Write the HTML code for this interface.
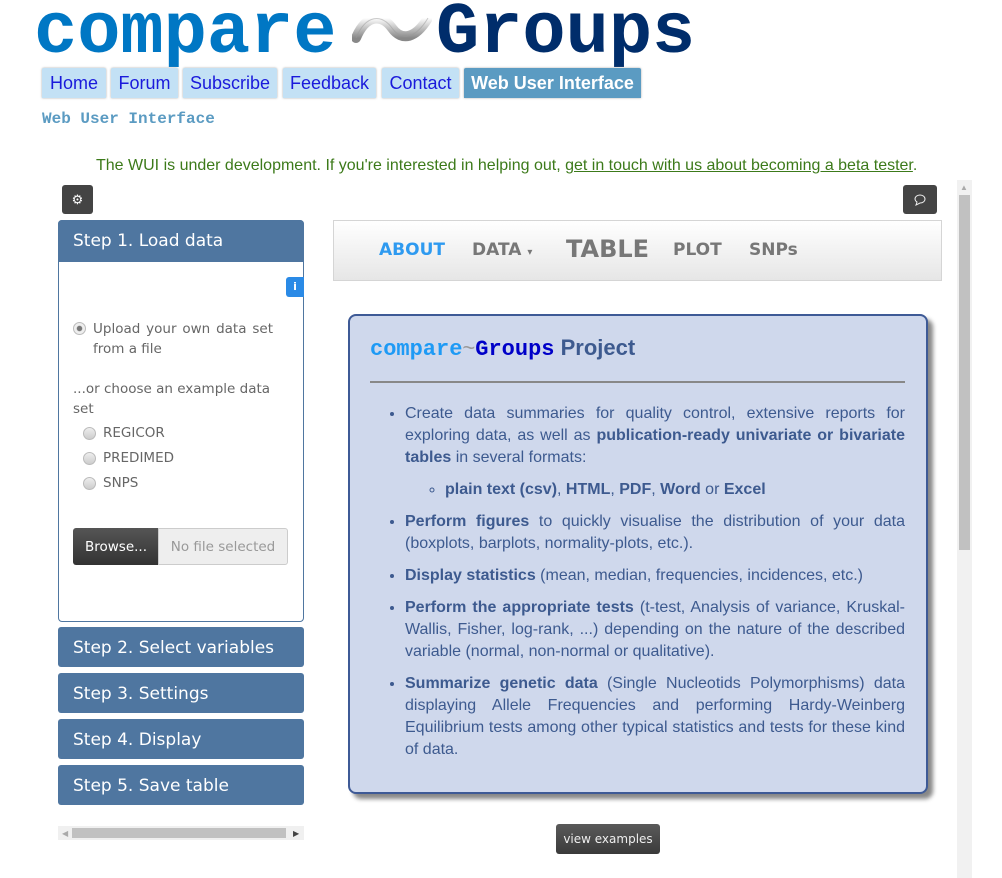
<!DOCTYPE html>
<html><head><meta charset="utf-8"><style>
body{margin:0;width:1002px;height:878px;overflow:hidden;background:#fff;font-family:"Liberation Sans",sans-serif;position:relative}
.abs{position:absolute}
.logo{font-family:"Liberation Mono",monospace;font-weight:bold;font-size:72px;line-height:1;top:-3px;white-space:nowrap}
.tab{position:absolute;top:68px;height:30px;background:#c3e1f5;color:#1a1adb;font-size:18px;line-height:30px;text-align:center;border-radius:2px 2px 0 0;box-shadow:0 0 2px #aaa}
.side{font-family:"DejaVu Sans",sans-serif}
.step{position:absolute;left:58px;width:246px;height:40px;background:#4f76a0;color:#fff;font-size:17px;line-height:42px;padding-left:15px;box-sizing:border-box;border-radius:3px}
.lbl{position:absolute;color:#666;font-size:13.5px}
.rad{position:absolute;width:11px;height:11px;border-radius:50%;border:1px solid #bbb;background:linear-gradient(#eee,#ccc)}
ul{margin:0;padding:0}
.card li{margin-bottom:10px}
</style></head><body>
<div class="abs logo" style="left:34px;color:#0077c4">compare</div>
<svg class="abs" style="left:352px;top:8px" width="80" height="40" viewBox="0 0 80 40"><defs><linearGradient id="g" x1="0" y1="0" x2="0" y2="1"><stop offset="0" stop-color="#fff"/><stop offset="1" stop-color="#888"/></linearGradient></defs><path d="M4 30 C14 6 30 6 40 20 C50 34 64 30 76 10" stroke="url(#g)" stroke-width="10" fill="none" stroke-linecap="round"/><path d="M4 30 C14 6 30 6 40 20 C50 34 64 30 76 10" stroke="#999" stroke-width="1" fill="none" opacity=".5"/></svg>
<div class="abs logo" style="left:436px;color:#002d6b">Groups</div>

<div class="tab" style="left:42px;width:64px">Home</div>
<div class="tab" style="left:111px;width:67px">Forum</div>
<div class="tab" style="left:183px;width:94px">Subscribe</div>
<div class="tab" style="left:283px;width:93px">Feedback</div>
<div class="tab" style="left:382px;width:77px">Contact</div>
<div class="tab" style="left:464px;width:177px;background:#5b9bc2;color:#fff;font-weight:bold">Web User Interface</div>
<div class="abs" style="left:42px;top:110px;font-family:'Liberation Mono',monospace;font-weight:bold;font-size:16px;color:#5b9bc2">Web User Interface</div>
<div class="abs" style="left:96px;top:157px;font-size:16px;color:#3c7a1a">The WUI is under development. If you're interested in helping out, <u>get in touch with us about becoming a beta tester</u>.</div>

<div class="abs" style="left:62px;top:185px;width:31px;height:29px;background:#444;border-radius:3px;color:#fff;font-size:13px;text-align:center;line-height:29px">&#9881;</div>
<div class="abs" style="left:903px;top:185px;width:34px;height:29px;background:#444;border-radius:3px"><svg width="34" height="29"><path d="M12 14 a5 4 0 1 1 5 4 l-4 2 l1-3 a5 4 0 0 1 -2 -3z" stroke="#eee" fill="none" stroke-width="1"/></svg></div>

<div class="side">
<div class="abs" style="left:58px;top:220px;width:246px;height:402px;border:1px solid #4f76a0;border-radius:4px;box-sizing:border-box"></div>
<div class="step" style="top:220px;height:42px;border-radius:4px 4px 0 0">Step 1. Load data</div>
<div class="abs" style="left:286px;top:277px;width:18px;height:20px;background:#2a8ae6;border-radius:3px 0 0 3px;color:#fff;font-size:11px;text-align:center;line-height:20px;font-weight:bold">i</div>
<div class="rad" style="left:73px;top:322px;background:radial-gradient(#777 30%,#eee 40%)"></div>
<div class="lbl" style="left:93px;top:319px;width:180px;line-height:20px;text-align:justify">Upload your own data set from a file</div>
<div class="lbl" style="left:73px;top:379px;width:200px;line-height:20px">...or choose an example data set</div>
<div class="rad" style="left:83px;top:427px"></div><div class="lbl" style="left:103px;top:425px">REGICOR</div>
<div class="rad" style="left:83px;top:452px"></div><div class="lbl" style="left:103px;top:450px">PREDIMED</div>
<div class="rad" style="left:83px;top:477px"></div><div class="lbl" style="left:103px;top:475px">SNPS</div>
<div class="abs" style="left:73px;top:528px;width:86px;height:37px;background:linear-gradient(#555,#333);border-radius:3px 0 0 3px;color:#fff;font-size:13.5px;line-height:39px;text-align:center">Browse...</div>
<div class="abs" style="left:158px;top:528px;width:130px;height:37px;background:#eee;border:1px solid #ccc;box-sizing:border-box;border-radius:0 3px 3px 0;color:#999;font-size:13.5px;line-height:37px;text-align:center">No file selected</div>
<div class="step" style="top:627px">Step 2. Select variables</div>
<div class="step" style="top:673px">Step 3. Settings</div>
<div class="step" style="top:719px">Step 4. Display</div>
<div class="step" style="top:765px">Step 5. Save table</div>
<div class="abs" style="left:58px;top:826px;width:246px;height:14px;background:#f0f0f0"><div class="abs" style="left:14px;top:2px;width:214px;height:10px;background:#c1c1c1"></div><div class="abs" style="left:4px;top:3px;font-size:8px;color:#aaa">&#9664;</div><div class="abs" style="left:235px;top:3px;font-size:8px;color:#444">&#9654;</div></div>
</div>

<div class="abs" style="left:333px;top:220px;width:609px;height:61px;background:linear-gradient(#fff,#e6e6e6);border:1px solid #d5d5d5;box-sizing:border-box"></div>
<div class="abs side" style="top:240px;left:379px;font-size:17px;font-weight:bold;color:#2e9af0">ABOUT</div>
<div class="abs side" style="top:240px;left:472px;font-size:17px;font-weight:bold;color:#777">DATA <span style="font-size:10px">&#9662;</span></div>
<div class="abs side" style="top:235px;left:566px;font-size:24px;font-weight:bold;color:#777">TABLE</div>
<div class="abs side" style="top:240px;left:673px;font-size:17px;font-weight:bold;color:#777">PLOT</div>
<div class="abs side" style="top:240px;left:749px;font-size:17px;font-weight:bold;color:#777">SNPs</div>

<div class="abs card" style="left:348px;top:314px;width:580px;height:480px;background:#cfd8ec;border:2px solid #3e5a96;border-radius:8px;box-sizing:border-box;box-shadow:5px 5px 4px #888;color:#3d5a8f">
<div class="abs" style="left:20px;top:19px;font-size:22px;white-space:nowrap"><span style="font-family:'Liberation Mono',monospace;font-weight:bold;color:#1e9af5">compare</span><span style="color:#999">~</span><span style="font-family:'Liberation Mono',monospace;font-weight:bold;color:#0000c8">Groups</span> <b style="color:#3d5a8f">Project</b></div>
<div class="abs" style="left:20px;top:65px;width:535px;height:2px;background:#888"></div>
<ul class="abs" style="left:55px;top:87px;width:500px;font-size:16px;line-height:22px;text-align:justify">
<li>Create data summaries for quality control, extensive reports for exploring data, as well as <b>publication-ready univariate or bivariate tables</b> in several formats:
<ul style="list-style:circle;padding-left:40px;margin-top:10px;text-align:left"><li><b>plain text (csv)</b>, <b>HTML</b>, <b>PDF</b>, <b>Word</b> or <b>Excel</b></li></ul></li>
<li><b>Perform figures</b> to quickly visualise the distribution of your data (boxplots, barplots, normality-plots, etc.).</li>
<li><b>Display statistics</b> (mean, median, frequencies, incidences, etc.)</li>
<li><b>Perform the appropriate tests</b> (t-test, Analysis of variance, Kruskal-Wallis, Fisher, log-rank, ...) depending on the nature of the described variable (normal, non-normal or qualitative).</li>
<li><b>Summarize genetic data</b> (Single Nucleotids Polymorphisms) data displaying Allele Frequencies and performing Hardy-Weinberg Equilibrium tests among other typical statistics and tests for these kind of data.</li>
</ul></div>

<div class="abs side" style="left:556px;top:824px;width:104px;height:30px;background:linear-gradient(#5a5a5a,#3a3a3a);border-radius:3px;color:#eee;font-size:12px;line-height:30px;text-align:center">view examples</div>

<div class="abs" style="left:957px;top:180px;width:15px;height:698px;background:#f1f1f1"><div class="abs" style="left:2px;top:15px;width:11px;height:355px;background:#c1c1c1"></div><div class="abs" style="left:3px;top:3px;font-size:8px;color:#aaa">&#9650;</div></div>
</body></html>
